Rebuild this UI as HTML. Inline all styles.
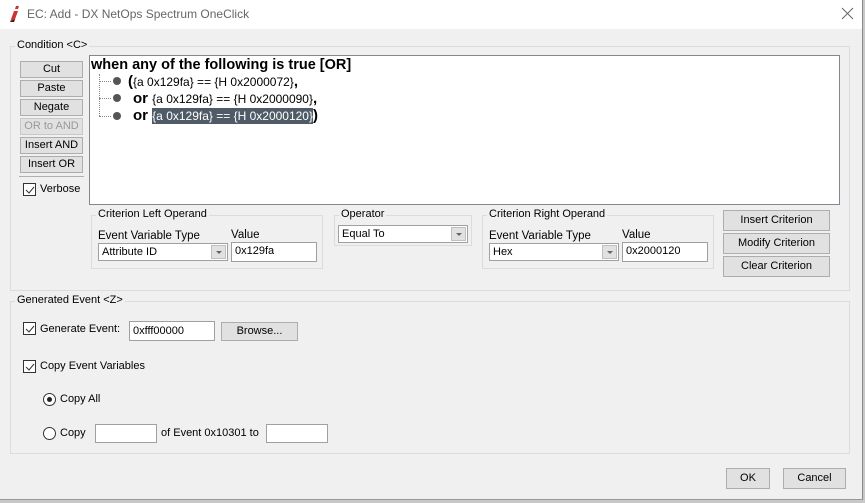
<!DOCTYPE html>
<html><head><style>
*{box-sizing:border-box}
body{margin:0;width:865px;height:503px;background:#c8c8c8;font-family:"Liberation Sans",sans-serif;font-size:11px;color:#000;position:relative;overflow:hidden}
.a{position:absolute}
#dlg{left:0;top:0;width:863px;height:500px;background:#f0f0f0;border-right:1px solid #888;border-bottom:1px solid #999}
#title{left:0;top:0;width:862px;height:29px;background:#fff}
.fs{position:absolute;border:1px solid #dcdcdc}
.lg{position:absolute;background:#f0f0f0;padding:0 2px;top:-8px;left:4px;white-space:nowrap}
.btn{position:absolute;background:#e1e1e1;border:1px solid #adadad;text-align:center;line-height:15px;white-space:nowrap}
.inp{position:absolute;background:#fff;border:1px solid #a0a0a0;padding-left:3px;line-height:16px;white-space:nowrap}
.cb{position:absolute;width:13px;height:13px;border:1px solid #333;background:#fff}
.cb svg{position:absolute;left:0;top:0}
.rd{position:absolute;width:13px;height:13px;border:1px solid #333;border-radius:50%;background:#fff}
.dd{position:absolute;right:1px;top:1px;width:15px;height:14px;background:#e1e1e1;border:1px solid #c0c0c0}
.dd:after{content:"";position:absolute;left:4px;top:5px;border-left:3px solid transparent;border-right:3px solid transparent;border-top:3px solid #666}
.t{position:absolute;white-space:nowrap}
.tr{font-size:12px}
</style></head><body>
<div id="dlg" class="a"></div>
<div id="title" class="a"></div>
<svg class="a" style="left:8px;top:5px" width="12" height="18"><path d="M8 1 L11 1 L10 4 L7 4Z" fill="#c33"/><path d="M6 6 L10 6 L6 17 L2 17Z" fill="#c33"/><path d="M2 17 L6 17 L7 14Z" fill="#222"/></svg>
<div class="t" style="left:27px;top:7px;font-size:12px;color:#666">EC: Add - DX NetOps Spectrum OneClick</div>
<svg class="a" style="left:841px;top:7px" width="13" height="13"><path d="M1 1L12 12M12 1L1 12" stroke="#666" stroke-width="1"/></svg>

<div class="fs" style="left:10px;top:46px;width:840px;height:245px"><span class="lg">Condition &lt;C&gt;</span></div>
<div class="btn" style="left:20px;top:61px;width:63px;height:17px">Cut</div>
<div class="btn" style="left:20px;top:80px;width:63px;height:17px">Paste</div>
<div class="btn" style="left:20px;top:99px;width:63px;height:17px">Negate</div>
<div class="btn" style="left:20px;top:118px;width:63px;height:17px;color:#999;border-color:#c8c8c8">OR to AND</div>
<div class="btn" style="left:20px;top:137px;width:63px;height:17px">Insert AND</div>
<div class="btn" style="left:20px;top:156px;width:63px;height:17px">Insert OR</div>
<div class="a" style="left:19px;top:176px;width:65px;height:1px;background:#b0b0b0"></div>
<div class="cb" style="left:23px;top:183px"><svg width="12" height="12"><path d="M2 6L5 9L10 3" stroke="#333" fill="none"/></svg></div>
<div class="t" style="left:40px;top:183px">Verbose</div>

<div class="a" style="left:89px;top:55px;width:751px;height:150px;background:#fff;border:1px solid #828790"></div>
<div class="t" style="left:91px;top:57px;font-size:14.5px;font-weight:bold">when any of the following is true [OR]</div>
<div class="a" style="left:99px;top:74px;height:42px;border-left:1px dotted #888"></div>
<div class="a" style="left:99px;top:81px;width:12px;border-top:1px dotted #888"></div>
<div class="a" style="left:99px;top:98px;width:12px;border-top:1px dotted #888"></div>
<div class="a" style="left:99px;top:116px;width:12px;border-top:1px dotted #888"></div>
<div class="a" style="left:113px;top:77px;width:8px;height:8px;border-radius:50%;background:#555"></div>
<div class="a" style="left:113px;top:94px;width:8px;height:8px;border-radius:50%;background:#555"></div>
<div class="a" style="left:113px;top:112px;width:8px;height:8px;border-radius:50%;background:#555"></div>
<div class="t tr" style="left:128px;top:73px"><b style="font-size:15px">(</b>{a 0x129fa} == {H 0x2000072}<b style="font-size:15px">,</b></div>
<div class="t tr" style="left:133px;top:90px"><b style="font-size:15px">or </b>{a 0x129fa} == {H 0x2000090}<b style="font-size:15px">,</b></div>
<div class="t tr" style="left:133px;top:107px"><b style="font-size:15px">or </b><span style="background:#4f5b66;color:#fff;padding:1px 0">{a 0x129fa} == {H 0x2000120}</span><b style="font-size:15px">)</b></div>

<div class="fs" style="left:91px;top:215px;width:232px;height:54px"><span class="lg">Criterion Left Operand</span></div>
<div class="t" style="left:98px;top:230px;font-size:11.5px">Event Variable Type</div>
<div class="t" style="left:231px;top:229px;font-size:11.5px">Value</div>
<div class="inp" style="left:98px;top:243px;width:130px;height:18px">Attribute ID<div class="dd"></div></div>
<div class="inp" style="left:231px;top:242px;width:86px;height:20px">0x129fa</div>

<div class="fs" style="left:334px;top:215px;width:138px;height:31px"><span class="lg">Operator</span></div>
<div class="inp" style="left:338px;top:225px;width:130px;height:18px">Equal To<div class="dd"></div></div>

<div class="fs" style="left:482px;top:215px;width:232px;height:54px"><span class="lg">Criterion Right Operand</span></div>
<div class="t" style="left:489px;top:230px;font-size:11.5px">Event Variable Type</div>
<div class="t" style="left:622px;top:229px;font-size:11.5px">Value</div>
<div class="inp" style="left:489px;top:243px;width:130px;height:18px">Hex<div class="dd"></div></div>
<div class="inp" style="left:622px;top:242px;width:86px;height:20px">0x2000120</div>

<div class="btn" style="left:723px;top:210px;width:107px;height:21px;line-height:19px">Insert Criterion</div>
<div class="btn" style="left:723px;top:233px;width:107px;height:21px;line-height:19px">Modify Criterion</div>
<div class="btn" style="left:723px;top:256px;width:107px;height:21px;line-height:19px">Clear Criterion</div>

<div class="fs" style="left:10px;top:301px;width:840px;height:153px"><span class="lg">Generated Event &lt;Z&gt;</span></div>
<div class="cb" style="left:23px;top:322px"><svg width="12" height="12"><path d="M2 6L5 9L10 3" stroke="#333" fill="none"/></svg></div>
<div class="t" style="left:40px;top:323px">Generate Event:</div>
<div class="inp" style="left:129px;top:321px;width:86px;height:20px;line-height:18px">0xfff00000</div>
<div class="btn" style="left:221px;top:322px;width:77px;height:19px;line-height:17px">Browse...</div>
<div class="cb" style="left:23px;top:360px"><svg width="12" height="12"><path d="M2 6L5 9L10 3" stroke="#333" fill="none"/></svg></div>
<div class="t" style="left:40px;top:360px">Copy Event Variables</div>
<div class="rd" style="left:43px;top:393px"><div class="a" style="left:3px;top:3px;width:5px;height:5px;border-radius:50%;background:#222"></div></div>
<div class="t" style="left:60px;top:393px">Copy All</div>
<div class="rd" style="left:43px;top:427px"></div>
<div class="t" style="left:60px;top:427px">Copy</div>
<div class="inp" style="left:95px;top:424px;width:62px;height:19px"></div>
<div class="t" style="left:161px;top:427px">of Event 0x10301 to</div>
<div class="inp" style="left:266px;top:424px;width:62px;height:19px"></div>

<div class="btn" style="left:726px;top:468px;width:44px;height:21px;line-height:19px">OK</div>
<div class="btn" style="left:783px;top:468px;width:63px;height:21px;line-height:19px">Cancel</div>
</body></html>
